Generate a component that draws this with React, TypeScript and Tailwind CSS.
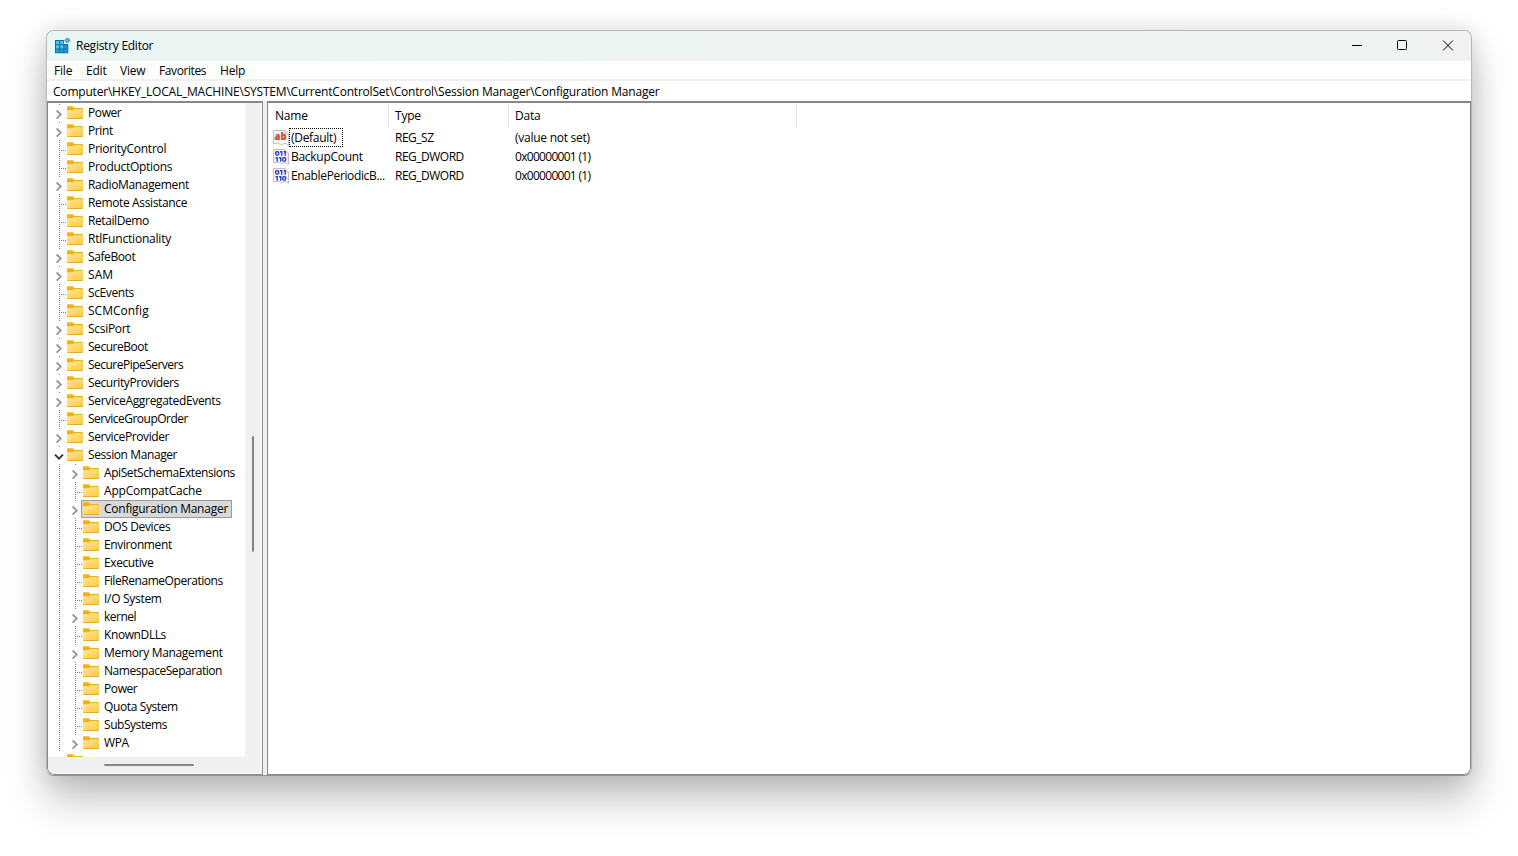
import clsx from "clsx";

type Item = { name: string; track: string; open?: boolean; kids?: boolean; level?: number; selected?: boolean; last?: boolean };

const ITEMS: Item[] = [
  { name: "Power", track: "tracking-[-0.4px]", kids: true },
  { name: "Print", track: "tracking-[-0.4px]", kids: true },
  { name: "PriorityControl", track: "tracking-[-0.26px]" },
  { name: "ProductOptions", track: "tracking-[-0.3px]" },
  { name: "RadioManagement", track: "tracking-[-0.33px]", kids: true },
  { name: "Remote Assistance", track: "tracking-[-0.36px]" },
  { name: "RetailDemo", track: "tracking-[-0.42px]" },
  { name: "RtlFunctionality", track: "tracking-[-0.2px]" },
  { name: "SafeBoot", track: "tracking-[-0.4px]", kids: true },
  { name: "SAM", track: "tracking-[0.1px]", kids: true },
  { name: "ScEvents", track: "tracking-[-0.4px]" },
  { name: "SCMConfig", track: "tracking-[0px]" },
  { name: "ScsiPort", track: "tracking-[-0.3px]", kids: true },
  { name: "SecureBoot", track: "tracking-[-0.47px]", kids: true },
  { name: "SecurePipeServers", track: "tracking-[-0.52px]", kids: true },
  { name: "SecurityProviders", track: "tracking-[-0.4px]", kids: true },
  { name: "ServiceAggregatedEvents", track: "tracking-[-0.33px]", kids: true },
  { name: "ServiceGroupOrder", track: "tracking-[-0.5px]" },
  { name: "ServiceProvider", track: "tracking-[-0.4px]", kids: true },
  { name: "Session Manager", track: "tracking-[-0.4px]", kids: true, open: true },
  { name: "ApiSetSchemaExtensions", track: "tracking-[-0.42px]", kids: true, level: 1 },
  { name: "AppCompatCache", track: "tracking-[-0.2px]", level: 1 },
  { name: "Configuration Manager", track: "tracking-[-0.25px]", kids: true, level: 1, selected: true },
  { name: "DOS Devices", track: "tracking-[-0.38px]", level: 1 },
  { name: "Environment", track: "tracking-[-0.38px]", level: 1 },
  { name: "Executive", track: "tracking-[-0.4px]", level: 1 },
  { name: "FileRenameOperations", track: "tracking-[-0.44px]", level: 1 },
  { name: "I/O System", track: "tracking-[-0.3px]", level: 1 },
  { name: "kernel", track: "tracking-[-0.5px]", kids: true, level: 1 },
  { name: "KnownDLLs", track: "tracking-[-0.4px]", level: 1 },
  { name: "Memory Management", track: "tracking-[-0.32px]", kids: true, level: 1 },
  { name: "NamespaceSeparation", track: "tracking-[-0.45px]", level: 1 },
  { name: "Power", track: "tracking-[-0.4px]", level: 1 },
  { name: "Quota System", track: "tracking-[-0.38px]", level: 1 },
  { name: "SubSystems", track: "tracking-[-0.45px]", level: 1 },
  { name: "WPA", track: "tracking-[-0.4px]", kids: true, level: 1, last: true },
];

const VALUES = [
  { name: "(Default)", track: "tracking-[-0.3px]", type: "REG_SZ", data: "(value not set)", dataTrack: "tracking-[-0.26px]", focused: true },
  { name: "BackupCount", track: "tracking-[-0.28px]", type: "REG_DWORD", data: "0x00000001 (1)", dataTrack: "tracking-[-0.7px]" },
  { name: "EnablePeriodicB...", track: "tracking-[-0.36px]", type: "REG_DWORD", data: "0x00000001 (1)", dataTrack: "tracking-[-0.7px]" },
];

function Folder() {
  return (
    <svg width="16" height="14" viewBox="0 0 16 14" className="shrink-0">
      <defs>
        <linearGradient id="folder" x1="0" y1="0" x2="1" y2="1">
          <stop offset="0" stopColor="#ffe8a0" />
          <stop offset="1" stopColor="#ffc937" />
        </linearGradient>
      </defs>
      <path d="M0 1.2Q0 .3 1 .3H5.6L7.4 2H15Q16 2 16 3V8H0Z" fill="#f5b010" />
      <path d="M0 4.2H6L7.4 3H15.2Q16 3 16 3.8V12Q16 13 15 13H1Q0 13 0 12Z" fill="url(#folder)" />
      <path d="M.3 12.5H15.7" stroke="#e9ac2c" strokeWidth="1" />
    </svg>
  );
}

// dotted guide lines plus the expander for one 18px row
function Branch({ item }: { item: Item }) {
  return (
    <svg width="16" height="18" viewBox="0 0 16 18" className="shrink-0" shapeRendering="crispEdges">
      {item.kids ? (
        <>
          <path d="M8.5 0V2" stroke="#808080" strokeDasharray="1 1" />
          <path
            d={item.open ? "M4 8.7L8 12.7L12 8.7" : "M5.6 6.5L9.8 10.6L5.6 14.7"}
            fill="none"
            stroke={item.open ? "#303030" : "#969696"}
            strokeWidth="1.8"
            shapeRendering="auto"
          />
        </>
      ) : (
        <>
          <path d="M8.5 0V18" stroke="#808080" strokeDasharray="1 1" />
          <path d="M10 10.5H15" stroke="#808080" strokeDasharray="1 1" />
        </>
      )}
    </svg>
  );
}

function Guide() {
  return (
    <svg width="16" height="18" viewBox="0 0 16 18" className="shrink-0" shapeRendering="crispEdges">
      <path d="M8.5 0V18" stroke="#808080" strokeDasharray="1 1" />
    </svg>
  );
}

function TreeRow({ item }: { item: Item }) {
  return (
    <div className="flex h-[18px] items-center pl-[3px]">
      {item.level && <Guide />}
      <Branch item={item} />
      <div
        className={clsx(
          "-ml-0.5 flex h-[18px] items-center border pl-px pr-[3px]",
          item.selected ? "border-[#999] bg-[#d9d9d9]" : "border-transparent",
        )}
      >
        <Folder />
        <span className={clsx("ml-[5px] leading-4", item.track)}>{item.name}</span>
      </div>
    </div>
  );
}

function AppIcon() {
  return (
    <svg width="17" height="16" viewBox="0 0 17 16">
      <path d="M0 2H9V6H13.3V15.3H0Z" fill="#0b6ea8" />
      <path d="M1 3H4.2V6.2H1ZM5.2 3H8.4V6.2H5.2ZM1 7.2H4.2V10.4H1ZM5.2 7.2H8.4V10.4H5.2Z" fill="#4cc4ef" />
      <path d="M9.4 7.2H12.4V10.4H9.4ZM1 11.4H4.2V14.4H1ZM5.2 11.4H8.4V14.4H5.2ZM9.4 11.4H12.4V14.4H9.4Z" fill="#1c9fdf" />
      <path d="M12.4 -.2L15 2.4L12.4 5L9.8 2.4Z" fill="#55b8dc" stroke="#1a80ae" strokeWidth=".9" />
    </svg>
  );
}

function ValueIcon({ text }: { text?: boolean }) {
  return (
    <svg width="16" height="16" viewBox="0 0 16 16" className="shrink-0">
      <path d="M.5 .5H12L15.5 4V15.3L12 13.2L8.5 14.8L4.5 13L.5 13.8Z" fill="#f8f8f8" stroke="#c0c0c0" />
      <path d="M12 .5V4H15.5" fill="none" stroke="#c0c0c0" />
      {text ? (
        <text x="1.5" y="10.2" fontSize="10.5" fontWeight="800" fontFamily="Open Sans" fill="#d8452a" textLength="12" lengthAdjust="spacingAndGlyphs" letterSpacing="0">
          ab
        </text>
      ) : (
        <g fill="none" stroke="#2a40d0" strokeWidth="1.4">
          <rect x="2.7" y="2.7" width="3" height="3.4" rx="1" />
          <path d="M7 2.7H8.7V6.8M10.5 2.7H12.2V6.8" />
          <path d="M2.5 8.7H4.2V12.8M6 8.7H7.7V12.8" />
          <rect x="9.7" y="8.7" width="3" height="3.4" rx="1" />
        </g>
      )}
    </svg>
  );
}

export default function App() {
  return (
    <div className="h-[856px] w-[1518px] overflow-hidden bg-white pl-[46px] pt-[30px] font-['Open_Sans','Noto_Sans',sans-serif] text-[12px] tracking-[-0.2px] whitespace-nowrap text-black">
      <div className="flex h-[746px] w-[1426px] flex-col overflow-hidden rounded-lg border border-[#b5b7b9] border-b-[#8f9298] bg-white shadow-[0_24px_40px_rgba(0,0,0,0.24),0_0_24px_rgba(0,0,0,0.13)]">
        <div className="flex h-[30px] shrink-0 items-center bg-gradient-to-r from-[#eaf5f4] to-[#f1f3f3] pl-2">
          <AppIcon />
          <span className="ml-1 tracking-[-0.26px]">Registry Editor</span>
          <div className="ml-auto flex items-center">
            <svg width="120" height="30" viewBox="0 0 120 30" fill="none" stroke="#000">
              <path d="M1 14.5H11" />
              <rect x="46.5" y="9.5" width="9" height="9" rx="1" />
              <path d="M92 9.5L102 19.5M102 9.5L92 19.5" />
            </svg>
          </div>
        </div>
        <div className="flex h-[18px] shrink-0 items-center bg-white pl-[7px] pt-[2px]">
          <span className="w-8">File</span>
          <span className="w-[34px]">Edit</span>
          <span className="w-[39px]">View</span>
          <span className="w-[61px] tracking-[-0.4px]">Favorites</span>
          <span>Help</span>
        </div>
        <div className="flex h-[22px] shrink-0 items-center border-t-2 border-[#f0f0f0] pl-[6px] pt-[2px]">
          <span className="tracking-[-0.2px]">
            Computer\HKEY_LOCAL_MACHINE\SYSTEM\CurrentControlSet\Control\Session Manager\Configuration Manager
          </span>
        </div>
        <div className="flex min-h-0 flex-1 bg-[#f0f0f0]">
          <div className="flex w-[216px] flex-col rounded-bl-[7px] border border-t-2 border-[#828790] bg-white">
            <div className="flex min-h-0 flex-1">
              <div className="w-[197px] overflow-hidden pt-px">
                {ITEMS.map((item, i) => (
                  <TreeRow key={i} item={item} />
                ))}
                <div className="pl-[19px] pt-[2px]">
                  <Folder />
                </div>
              </div>
              <div className="w-4 bg-[#f0f0f0] pl-[7px] pt-[333px]">
                <div className="h-[116px] w-0.5 rounded-full bg-[#858585]" />
              </div>
            </div>
            <div className="mr-px mb-px h-4 rounded-bl-[6px] bg-[#f0f0f0] pl-14 pt-[7px]">
              <div className="h-0.5 w-[90px] rounded-full bg-[#858585]" />
            </div>
          </div>
          <div className="ml-1 flex-1 rounded-br-[7px] border border-t-2 border-[#828790] bg-white">
            <div className="flex h-[25px] pt-px">
              <div className="w-[121px] border-r border-[#e5e5e5] pl-[7px] leading-6">Name</div>
              <div className="w-[120px] border-r border-[#e5e5e5] pl-[6px] leading-6">Type</div>
              <div className="w-[288px] border-r border-[#e5e5e5] pl-[6px] leading-6">Data</div>
            </div>
            {VALUES.map((value) => (
              <div key={value.name} className="flex h-[19px] items-center pl-[5px]">
                <ValueIcon text={value.focused} />
                <div className="w-[106px]">
                  <span
                    className={clsx(
                      "inline-block border border-dotted pl-px leading-[17px]",
                      value.track,
                      value.focused ? "w-[54px] border-black" : "border-transparent",
                    )}
                  >
                    {value.name}
                  </span>
                </div>
                <span className="w-[120px] tracking-[-0.5px]">{value.type}</span>
                <span className={value.dataTrack}>{value.data}</span>
              </div>
            ))}
          </div>
        </div>
      </div>
    </div>
  );
}
